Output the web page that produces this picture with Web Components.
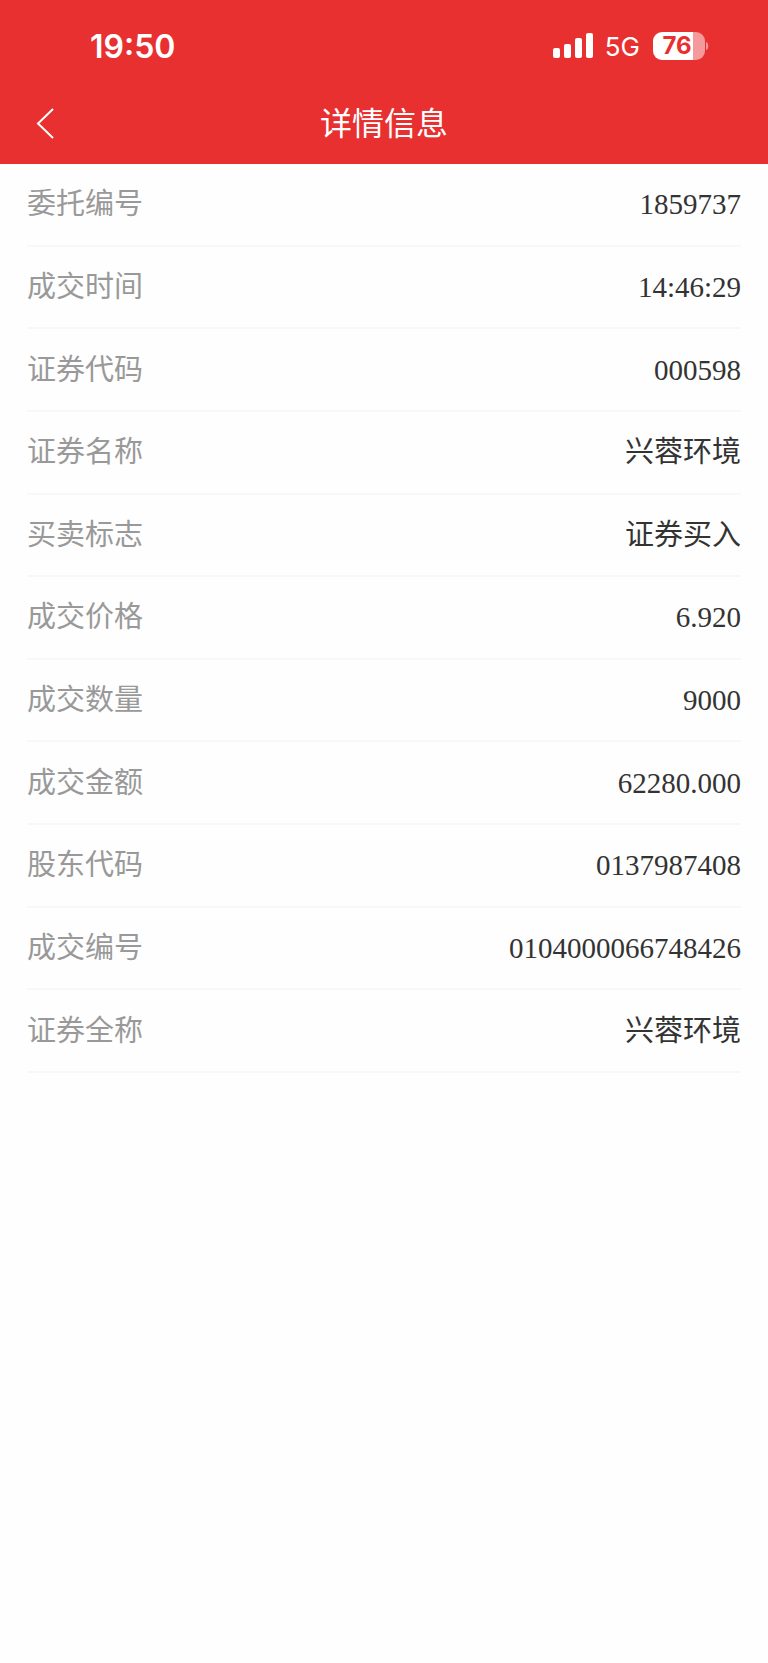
<!DOCTYPE html>
<html lang="zh-CN">
<head>
<meta charset="utf-8">
<meta name="viewport" content="width=device-width, initial-scale=1">
<title>详情信息</title>
<style>
  :root {
    --brand: #e83030;
    --label: #999;
    --text: #333;
    --line: #f8f8f8;
  }

  body {
    margin: 0;
    background: #fefefe;
    color: var(--text);
    font-family: "Liberation Serif", "Noto Sans CJK SC", serif;
  }
</style>
</head>
<body>
<status-bar time="19:50" network="5G" battery="76"></status-bar>
<nav-header>详情信息</nav-header>
<detail-list>
  <detail-row label="委托编号">1859737</detail-row>
  <detail-row label="成交时间">14:46:29</detail-row>
  <detail-row label="证券代码">000598</detail-row>
  <detail-row label="证券名称">兴蓉环境</detail-row>
  <detail-row label="买卖标志">证券买入</detail-row>
  <detail-row label="成交价格">6.920</detail-row>
  <detail-row label="成交数量">9000</detail-row>
  <detail-row label="成交金额">62280.000</detail-row>
  <detail-row label="股东代码">0137987408</detail-row>
  <detail-row label="成交编号">0104000066748426</detail-row>
  <detail-row label="证券全称">兴蓉环境</detail-row>
</detail-list>

<script>
class StatusBar extends HTMLElement {
  constructor() {
    super();
    this.shadowDOM = this.attachShadow({ mode: 'open' });
  }

  connectedCallback() {
    this.render();
  }

  render() {
    this.shadowDOM.innerHTML = `
      <style>
        :host {
          display: flex;
          align-items: center;
          justify-content: space-between;
          box-sizing: border-box;
          height: 84px;
          padding: 8px 58px 0 90px;
          background: var(--brand);
          color: white;
          font-family: Inter, sans-serif;
        }

        .time {
          font-size: 32px;
          font-weight: 600;
        }

        .status {
          display: flex;
          align-items: center;
        }

        .network {
          margin: 0 13px 0 12px;
          font-size: 26px;
        }

        svg {
          display: block;
        }

        .battery {
          display: grid;
          grid-template-columns: 52px 5px;
          align-items: center;
        }

        .level {
          height: 28px;
          padding-right: 4px;
          border-radius: 9px;
          box-sizing: border-box;
          background: linear-gradient(90deg, white ${this.getAttribute('battery')}%, #f59a9a 0);
          color: var(--brand);
          font-size: 24px;
          font-weight: 700;
          line-height: 28px;
          text-align: center;
        }
      </style>

      <span class="time">${this.getAttribute('time')}</span>
      <div class="status">
        <svg width="40" height="26" viewBox="0 0 40 26" fill="white" aria-hidden="true">
          <rect x="0" y="15" width="7" height="10" rx="2"/>
          <rect x="11" y="11" width="7" height="14" rx="2"/>
          <rect x="22" y="5" width="7" height="20" rx="2"/>
          <rect x="33" y="0" width="7" height="25" rx="2"/>
        </svg>
        <span class="network">${this.getAttribute('network')}</span>
        <div class="battery">
          <div class="level">${this.getAttribute('battery')}</div>
          <svg width="5" height="10" viewBox="0 0 5 10" aria-hidden="true">
            <path d="M1 1C4 2 4 8 1 9Z" fill="#f59a9a"/>
          </svg>
        </div>
      </div>
    `;
  }
}

class NavHeader extends HTMLElement {
  constructor() {
    super();
    this.shadowDOM = this.attachShadow({ mode: 'open' });
  }

  connectedCallback() {
    this.render();
    this.shadowDOM
      .querySelector('button')
      .addEventListener('click', () => history.back());
  }

  render() {
    this.shadowDOM.innerHTML = `
      <style>
        :host {
          display: grid;
          grid-template-columns: 80px 1fr 80px;
          align-items: center;
          height: 80px;
          background: var(--brand);
          color: white;
        }

        button {
          display: flex;
          align-items: center;
          height: 80px;
          padding: 0 0 0 36px;
          border: 0;
          background: none;
          color: inherit;
          cursor: pointer;
        }

        h1 {
          margin: 0;
          font-size: 32px;
          font-weight: 400;
          line-height: 48px;
          text-align: center;
        }
      </style>

      <button type="button" aria-label="返回">
        <svg width="20" height="32" viewBox="0 0 20 32" fill="none" stroke="currentColor" stroke-width="2" aria-hidden="true">
          <path d="M17 1L2 15.500L17 30"/>
        </svg>
      </button>
      <h1><slot></slot></h1>
    `;
  }
}

class DetailList extends HTMLElement {
  constructor() {
    super();
    this.shadowDOM = this.attachShadow({ mode: 'open' });
  }

  connectedCallback() {
    this.shadowDOM.innerHTML = `
      <style>
        :host {
          display: grid;
          grid-auto-rows: 1fr;
          min-height: 909px;
          padding: 0 27px;
        }
      </style>
      <slot></slot>
    `;
  }
}

class DetailRow extends HTMLElement {
  constructor() {
    super();
    this.shadowDOM = this.attachShadow({ mode: 'open' });
  }

  connectedCallback() {
    this.render();
  }

  render() {
    this.shadowDOM.innerHTML = `
      <style>
        :host {
          display: flex;
          align-items: center;
          justify-content: space-between;
          border-bottom: 2px solid var(--line);
          font-size: 29px;
          line-height: 40px;
        }

        .label {
          color: var(--label);
        }

        .value {
          text-align: right;
        }
      </style>

      <span class="label">${this.getAttribute('label')}</span>
      <span class="value"><slot></slot></span>
    `;
  }
}

customElements.define('status-bar', StatusBar);
customElements.define('nav-header', NavHeader);
customElements.define('detail-list', DetailList);
customElements.define('detail-row', DetailRow);
</script>
</body>
</html>
